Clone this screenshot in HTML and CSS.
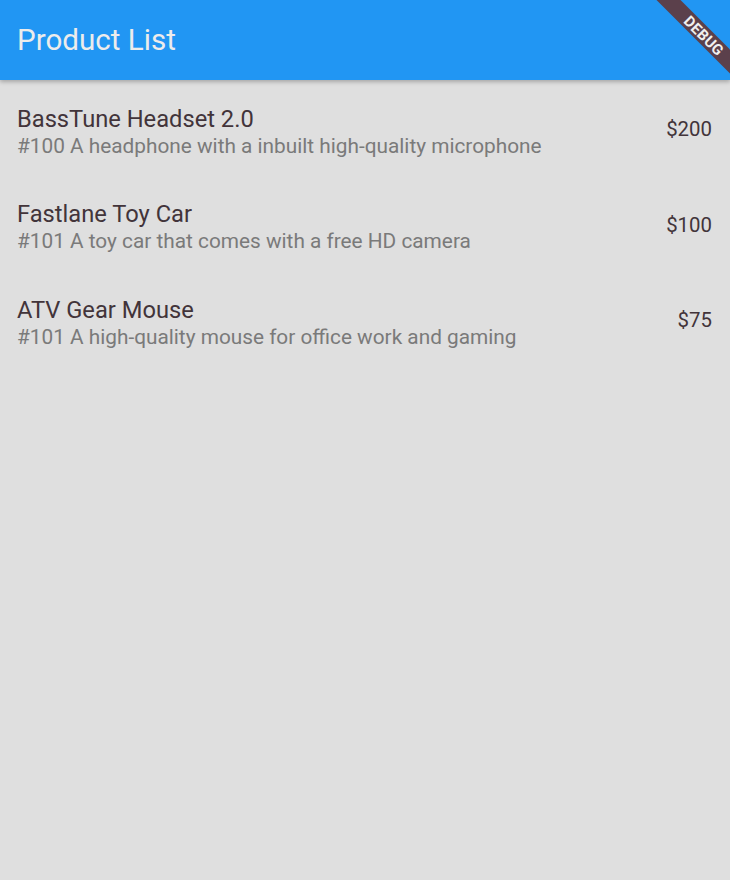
FILE: index.html
```html
<!DOCTYPE html>
<html>
<head>
<meta charset="utf-8">
<link rel="stylesheet" href="styles.css">
</head>
<body>
<div class="app">
  <header class="appbar">
    <h1 class="appbar-title">Product List</h1>
  </header>
  <ul class="list">
    <li class="tile">
      <div class="tile-text">
        <div class="tile-title">BassTune Headset 2.0</div>
        <div class="tile-sub">#100 A headphone with a inbuilt high-quality microphone</div>
      </div>
      <div class="tile-price">$200</div>
    </li>
    <li class="tile">
      <div class="tile-text">
        <div class="tile-title">Fastlane Toy Car</div>
        <div class="tile-sub">#101 A toy car that comes with a free HD camera</div>
      </div>
      <div class="tile-price">$100</div>
    </li>
    <li class="tile">
      <div class="tile-text">
        <div class="tile-title">ATV Gear Mouse</div>
        <div class="tile-sub">#101 A high-quality mouse for office work and gaming</div>
      </div>
      <div class="tile-price">$75</div>
    </li>
  </ul>
  <div class="debug-banner"><span>DEBUG</span></div>
</div>
</body>
</html>
```
FILE: styles.css
```css
html, body {
  margin: 0;
  padding: 0;
}
body {
  width: 730px;
  height: 880px;
  background: #dfdfdf;
  font-family: Roboto, "Noto Sans", sans-serif;
  overflow: hidden;
}
.app {
  position: relative;
  width: 730px;
  height: 880px;
  overflow: hidden;
}
.appbar {
  height: 80px;
  background: #2196f3;
  display: flex;
  align-items: center;
  padding: 0 17px;
  box-shadow: 0 2px 4px rgba(0,0,0,0.25);
  position: relative;
  z-index: 1;
}
.appbar-title {
  margin: 0;
  font-size: 29.6px;
  font-weight: 400;
  color: #ececec;
}
.list {
  list-style: none;
  margin: 0;
  padding: 4px 0 0;
}
.tile {
  height: 95.5px;
  display: flex;
  align-items: center;
  justify-content: space-between;
  padding: 0 18px 0 17px;
  box-sizing: border-box;
}
.tile-title {
  font-size: 23.7px;
  color: #42343a;
  line-height: 28px;
}
.tile-sub {
  font-size: 20.8px;
  color: #7a7a7a;
  line-height: 26px;
}
.tile-price {
  align-self: flex-start;
  margin-top: 33px;
  font-size: 20.4px;
  line-height: 24px;
  color: #42343a;
}
.debug-banner {
  position: absolute;
  left: 604px;
  top: 27px;
  width: 200px;
  height: 17px;
  background: #5b404b;
  transform: rotate(45deg);
  display: flex;
  align-items: center;
  justify-content: center;
  z-index: 2;
}
.debug-banner span {
  color: #f0f0f0;
  font-weight: 700;
  font-size: 15px;
  letter-spacing: 0.2px;
}
```
